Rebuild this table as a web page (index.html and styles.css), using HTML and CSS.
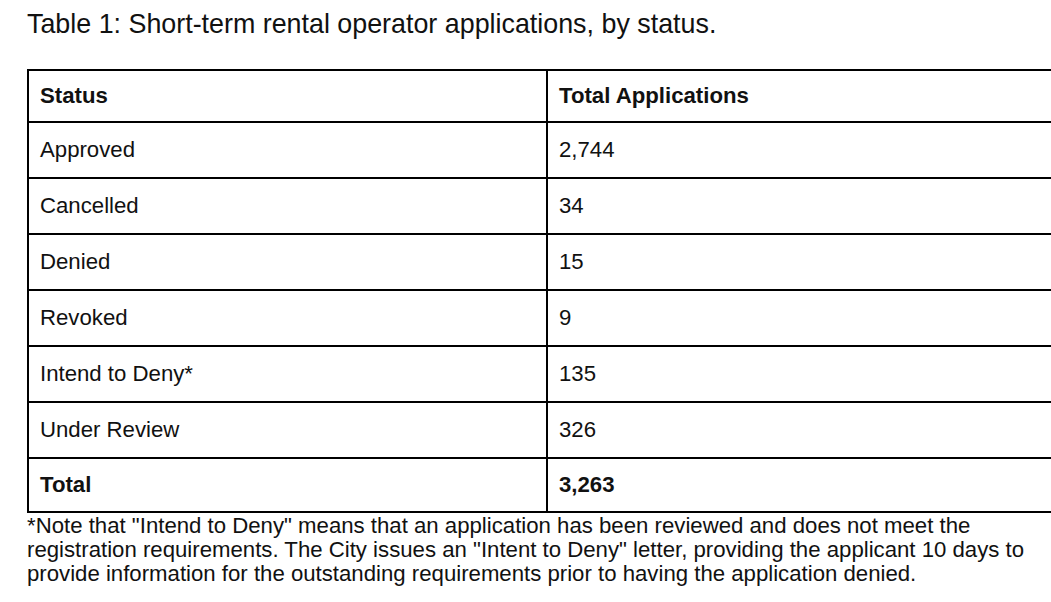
FILE: index.html
```html
<!DOCTYPE html>
<html>
<head>
<meta charset="utf-8">
<link rel="stylesheet" href="styles.css">
</head>
<body>
<div class="page">
  <h1 class="title">Table 1: Short-term rental operator applications, by status.</h1>
  <table class="data">
    <thead>
      <tr class="head"><th class="c1">Status</th><th class="c2">Total Applications</th></tr>
    </thead>
    <tbody>
      <tr class="row"><td>Approved</td><td>2,744</td></tr>
      <tr class="row"><td>Cancelled</td><td>34</td></tr>
      <tr class="row"><td>Denied</td><td>15</td></tr>
      <tr class="row"><td>Revoked</td><td>9</td></tr>
      <tr class="row"><td>Intend to Deny*</td><td>135</td></tr>
      <tr class="row"><td>Under Review</td><td>326</td></tr>
      <tr class="total"><td>Total</td><td>3,263</td></tr>
    </tbody>
  </table>
  <p class="note">*Note that "Intend to Deny" means that an application has been reviewed and does not meet the<br>registration requirements. The City issues an "Intent to Deny" letter, providing the applicant 10 days to<br>provide information for the outstanding requirements prior to having the application denied.</p>
</div>
</body>
</html>
```

FILE: styles.css
```css
html, body {
  margin: 0;
  padding: 0;
  background: #fff;
  overflow: hidden;
}
.page {
  width: 1051px;
  height: 602px;
  overflow: hidden;
  font-family: "Liberation Sans", Arial, sans-serif;
  color: #111;
}
.title {
  margin: 0;
  padding: 9px 0 0 27px;
  font-size: 26.85px;
  font-weight: normal;
  line-height: 30px;
  height: 59px;
  box-sizing: border-box;
}
.data {
  margin-left: 27px;
  margin-top: 10px;
  border-collapse: collapse;
  width: 1100px;
  table-layout: fixed;
  font-size: 22.2px;
}
.data th, .data td {
  border: 2px solid #000;
  padding: 0 0 0 11px;
  text-align: left;
  vertical-align: middle;
}
.data th { font-weight: bold; }
.c1 { width: 519px; }
.head th { height: 52px; box-sizing: border-box; }
.row td { height: 54px; }
.total td { height: 52px; font-weight: bold; }
.note {
  margin: 1px 0 0 27px;
  font-size: 22.2px;
  line-height: 24px;
}
```
